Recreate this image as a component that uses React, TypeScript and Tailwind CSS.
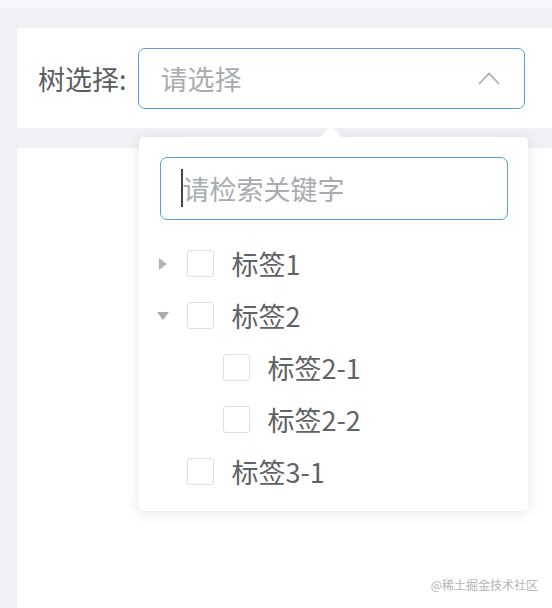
import React from "react";

const font = { fontFamily: '"Noto Sans CJK SC", "Noto Sans", sans-serif' };

type Node = { label: string; level: number; expander?: "right" | "down" };

const nodes: Node[] = [
  { label: "标签1", level: 0, expander: "right" },
  { label: "标签2", level: 0, expander: "down" },
  { label: "标签2-1", level: 1 },
  { label: "标签2-2", level: 1 },
  { label: "标签3-1", level: 0 },
];

function Caret({ dir }: { dir?: "right" | "down" }) {
  return (
    <svg width="14" height="14" viewBox="0 0 14 14" className="shrink-0">
      {dir === "right" && <polygon points="3,1 11,7 3,13" fill="#b1b3b8" />}
      {dir === "down" && <polygon points="1,3 13,3 7,11" fill="#a8abb2" />}
    </svg>
  );
}

function Row({ n }: { n: Node }) {
  return (
    <div
      className={`flex h-[52px] items-center ${n.level === 1 ? "pl-[53px]" : "pl-[17px]"}`}
    >
      <Caret dir={n.expander} />
      <div className="ml-[17px] h-[27px] w-[27px] shrink-0 rounded-[3px] border-[1.5px] border-[#dcdfe5] bg-white" />
      <span className="ml-[18px] text-[27px] leading-none text-[#5f6266]">{n.label}</span>
    </div>
  );
}

export default function App() {
  return (
    <div className="h-[608px] w-[552px] overflow-hidden bg-[#eff1f4]" style={font}>
      <div className="h-[8px] bg-[#f6f7f9]" />
      <div className="pl-[17px] pt-[20px]">
        <div className="flex h-[100px] items-center bg-white pl-[21px]">
          <span className="text-[27px] leading-none text-[#5a5d62]">树选择:</span>
          <div className="relative ml-[11px]">
            <div className="flex h-[61px] w-[387px] items-center justify-between rounded-[7px] border-[1.5px] border-[#5b9be6] bg-white pl-[22px] pr-[24px]">
              <span className="text-[27px] leading-none text-[#a8abb2]">请选择</span>
              <svg width="22" height="13" viewBox="0 0 22 13">
                <polyline points="1,12 11,1.5 21,12" fill="none" stroke="#a8abb2" strokeWidth="1.6" />
              </svg>
            </div>
            {/* dropdown */}
            <div className="absolute left-[1px] top-[89px] z-10 w-[389px] rounded-[5px] bg-white px-[21px] pb-[13px] pt-[20px] shadow-[0_2px_14px_rgba(0,0,0,0.10)]">
              <div className="absolute -top-[11px] left-[180px] h-0 w-0 border-x-[12px] border-b-[12px] border-x-transparent border-b-white" />
              <div className="flex h-[63px] w-[348px] items-center rounded-[7px] border-[1.5px] border-[#5b9be6] bg-white pl-[20px]">
                <div className="h-[38px] w-[2px] bg-[#444]" />
                <span className="text-[27px] leading-none text-[#a8abb2]">请检索关键字</span>
              </div>
              <div className="-ml-[21px] mt-[18px]">
                {nodes.map((n) => (
                  <Row key={n.label} n={n} />
                ))}
              </div>
            </div>
          </div>
        </div>
        <div className="relative mt-[20px] h-[460px] bg-white">
          <span className="absolute bottom-[17px] right-[14px] text-[12px] leading-none text-[#b4b4b4]">
            @稀土掘金技术社区
          </span>
        </div>
      </div>
    </div>
  );
}
